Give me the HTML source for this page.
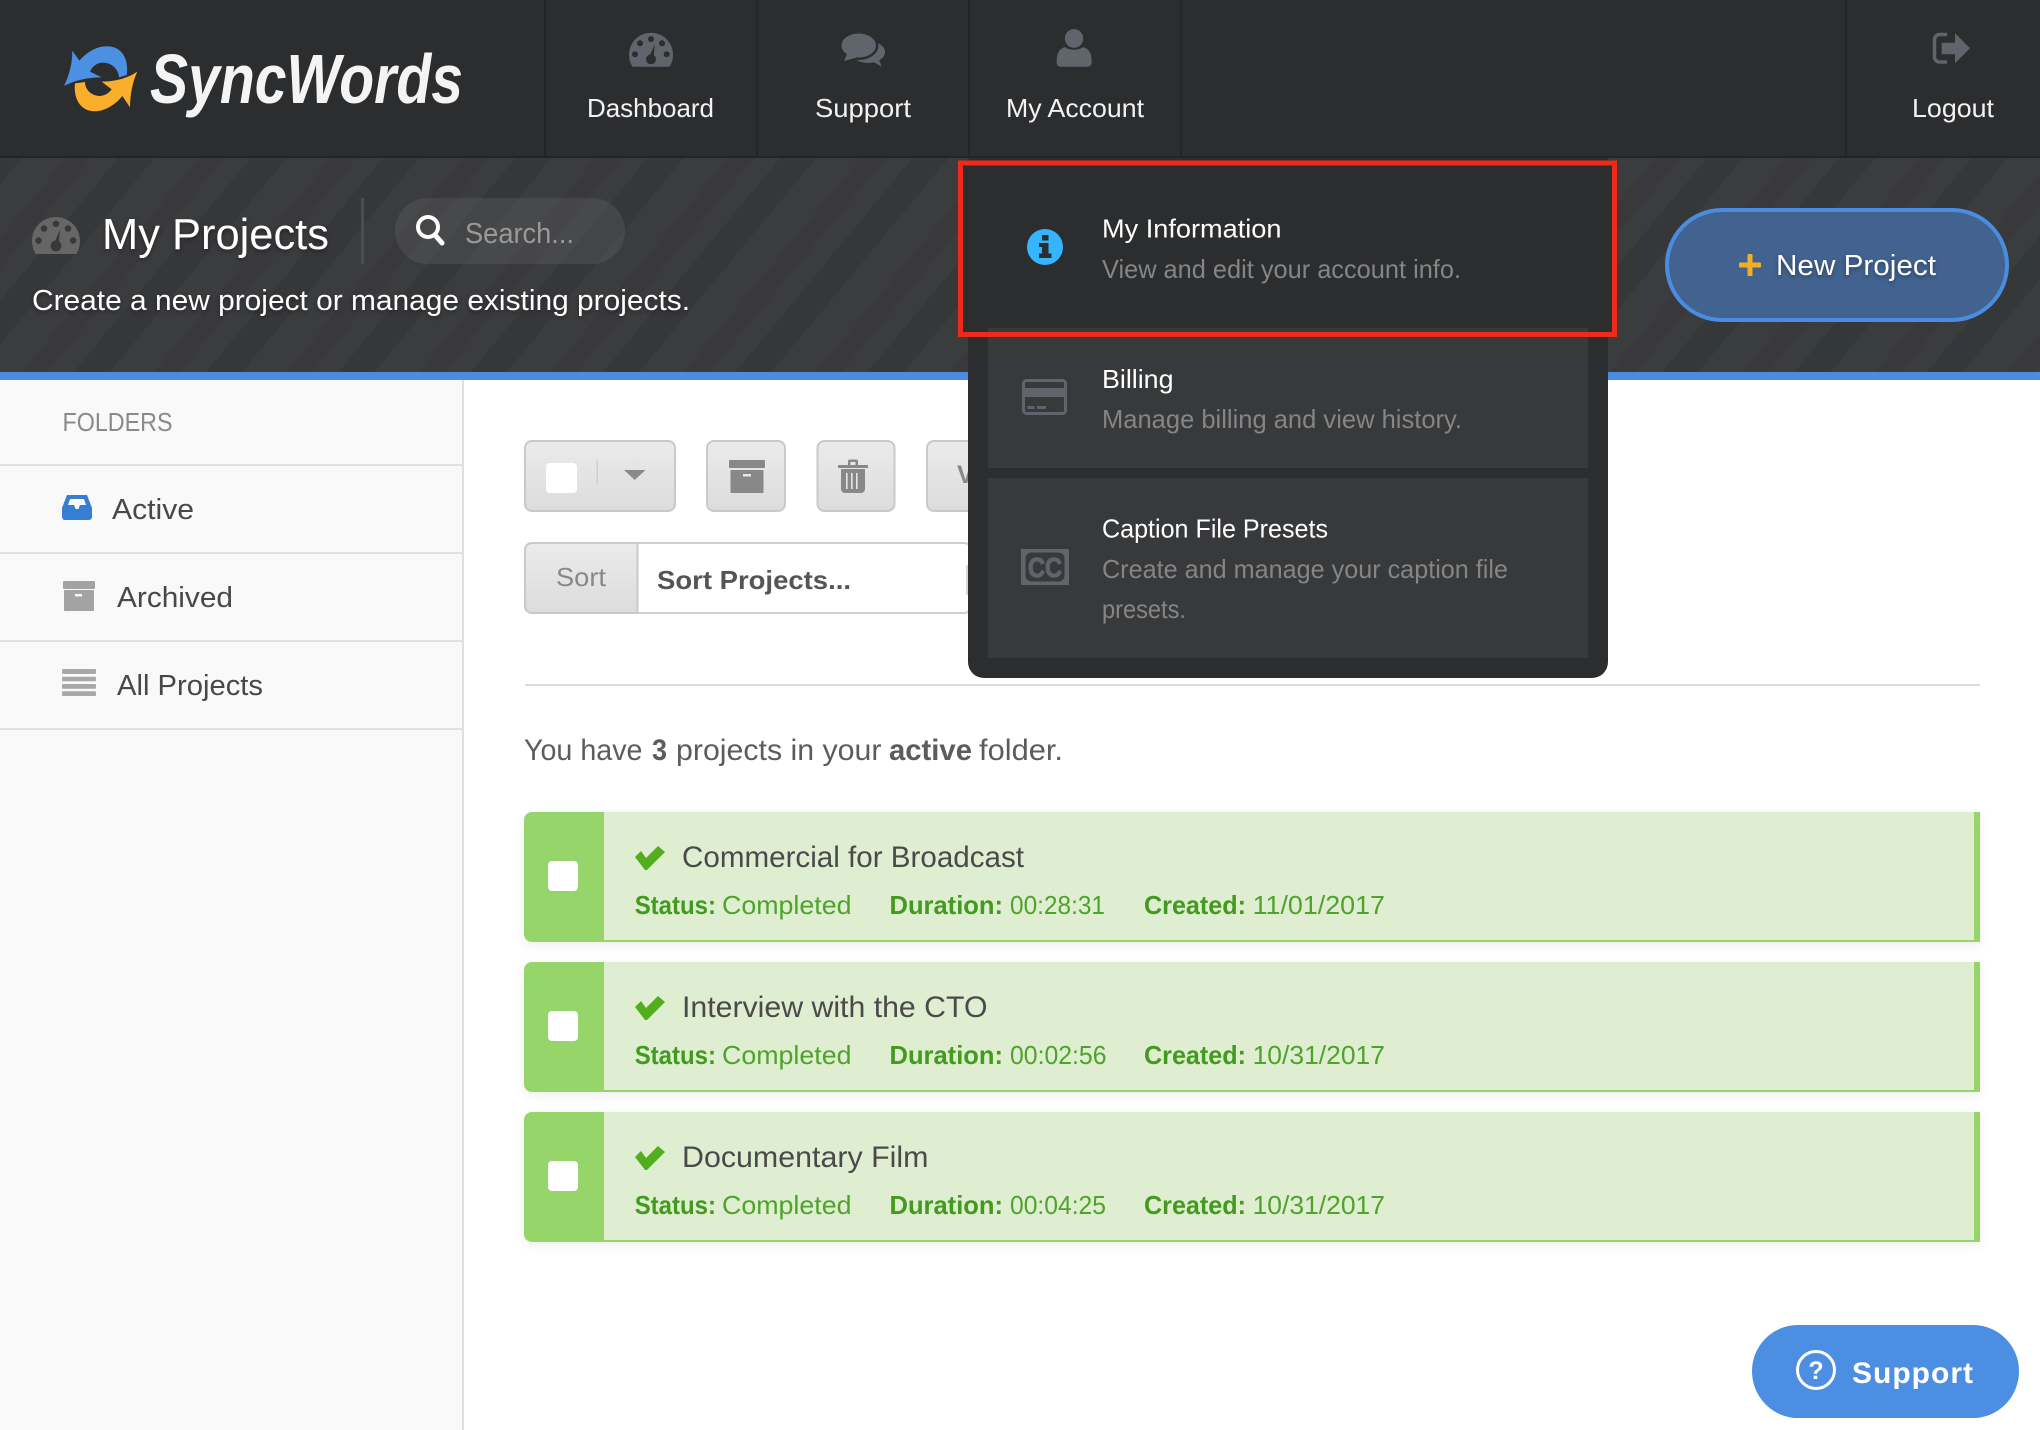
<!DOCTYPE html>
<html lang="en">
<head>
<meta charset="utf-8">
<title>SyncWords - My Projects</title>
<style>
html,body{margin:0;padding:0;background:#fff;width:2040px;height:1430px;overflow:hidden}
svg{display:block;font-family:"Liberation Sans",Arial,sans-serif}
.nav{font-size:26px;fill:#f2f2f2}
.side{font-size:29px;fill:#484848}
.t{font-size:26px;fill:#fff}
.d{font-size:26px;fill:#858585}
.ct{font-size:30px;fill:#4a4a4a}
.mb{font-size:26px;font-weight:bold;fill:#429a1e}
.mr{font-size:26px;fill:#4ea32a}
.y{font-size:30px;fill:#5c5c5c}
.yb{font-size:30px;fill:#5c5c5c;font-weight:bold}
.sh{filter:drop-shadow(0 2px 2px rgba(0,0,0,.35))}
</style>
</head>
<body>
<svg width="2040" height="1430" viewBox="0 0 2040 1430" xmlns="http://www.w3.org/2000/svg">
<defs>
<pattern id="st" patternUnits="userSpaceOnUse" width="102" height="20" patternTransform="translate(780 158) rotate(39.6)">
<rect width="102" height="20" fill="#3b3c3e"/>
<rect x="0" width="28" height="20" fill="#363739"/>
<rect x="62" width="20" height="20" fill="#39393c"/>
</pattern>
<linearGradient id="bt" x1="0" y1="0" x2="0" y2="1"><stop offset="0" stop-color="#ebebeb"/><stop offset="1" stop-color="#dcdcdc"/></linearGradient>
</defs>

<rect width="2040" height="1430" fill="#fff"/>

<!-- header -->
<rect width="2040" height="158" fill="#2c2d2f"/>
<rect y="156" width="2040" height="2" fill="#232426"/>
<rect x="544" width="2" height="156" fill="#242527"/>
<rect x="756" width="2" height="156" fill="#242527"/>
<rect x="968" width="2" height="156" fill="#242527"/>
<rect x="1180" width="2" height="156" fill="#242527"/>
<rect x="1845" width="2" height="156" fill="#242527"/>

<!-- logo -->
<g transform="translate(40 20) scale(.33333)">
<path d="M97 92 L118 122 C150 85 190 72 222 82 C252 92 266 125 260 165 L237 172 C236 150 218 130 192 128 C172 127 158 138 150 155 L185 172 C145 172 105 180 72 198 C88 165 97 130 97 92Z" fill="#4b90e2"/>
<path d="M292 155 C278 185 270 225 270 262 L247 228 C220 262 180 280 148 272 C118 264 100 232 105 190 L135 186 C135 208 152 226 178 228 C192 228 206 220 215 208 L185 185 C225 185 262 175 292 155Z" fill="#f9ae2c"/>
</g>
<text x="150" y="103" font-size="70" font-weight="bold" font-style="italic" fill="#f4f4f4" textLength="313" lengthAdjust="spacingAndGlyphs">SyncWords</text>

<!-- nav icons -->
<g transform="translate(629 32.7)">
<path d="M3.5 34 C1 30 0 26 0 22 A22 22 0 0 1 44 22 C44 26 43 30 40.5 34 Z" fill="#5f656b"/>
<g fill="#2c2d2f"><circle cx="22" cy="6.3" r="3"/><circle cx="11" cy="10.6" r="3"/><circle cx="33" cy="10.6" r="3"/><circle cx="6" cy="21.6" r="3"/><circle cx="37.7" cy="21.6" r="3"/><circle cx="22" cy="26.6" r="5"/><path d="M19.5 26 L24.5 26 L25.7 11.6Z"/></g>
</g>
<g>
<ellipse cx="868" cy="52" rx="17" ry="11" fill="#5f656b"/>
<path d="M870 60 L881.7 66.7 L878 57Z" fill="#5f656b"/>
<ellipse cx="858.7" cy="45.5" rx="18.5" ry="13.3" fill="#5f656b" stroke="#2c2d2f" stroke-width="2.5"/>
<path d="M847 54 L844 61 L857 57.5Z" fill="#5f656b"/>
</g>
<ellipse cx="1074" cy="38.5" rx="9.2" ry="9.4" fill="#5f656b"/>
<path d="M1056.7 62 C1056.7 53 1059 49 1065 47 C1068 50.5 1080 50.5 1083 47 C1089 49 1091.7 53 1091.7 62 C1091.7 65 1090 66.7 1087 66.7 H1061 C1058 66.7 1056.7 65 1056.7 62Z" fill="#5f656b"/>
<path d="M1947 34.5 H1939.5 a5 5 0 0 0 -5 5 V57 a5 5 0 0 0 5 5 H1947" fill="none" stroke="#5f656b" stroke-width="3.5"/>
<path d="M1941.7 42.7 H1955 V33.3 L1970 48.3 L1955 63.3 V54.3 H1941.7Z" fill="#5f656b"/>

<text class="nav" x="587" y="117" textLength="127" lengthAdjust="spacingAndGlyphs">Dashboard</text>
<text class="nav" x="815" y="117" textLength="96" lengthAdjust="spacingAndGlyphs">Support</text>
<text class="nav" x="1006" y="117" textLength="138" lengthAdjust="spacingAndGlyphs">My Account</text>
<text class="nav" x="1912" y="117" textLength="82" lengthAdjust="spacingAndGlyphs">Logout</text>

<!-- hero -->
<rect y="158" width="2040" height="214" fill="url(#st)"/>
<rect y="372" width="2040" height="8" fill="#4a8ce0"/>

<g transform="translate(32 217) scale(1.09)">
<path d="M3.5 34 C1 30 0 26 0 22 A22 22 0 0 1 44 22 C44 26 43 30 40.5 34 Z" fill="#666"/>
<g fill="#38393b"><circle cx="22" cy="6.3" r="3"/><circle cx="11" cy="10.6" r="3"/><circle cx="33" cy="10.6" r="3"/><circle cx="6" cy="21.6" r="3"/><circle cx="37.7" cy="21.6" r="3"/><circle cx="22" cy="26.6" r="5"/><path d="M19.5 26 L24.5 26 L25.7 11.6Z"/></g>
</g>
<text class="sh" x="102" y="249" font-size="44" fill="#fff" textLength="227" lengthAdjust="spacingAndGlyphs">My Projects</text>
<rect x="361" y="198" width="3" height="66" fill="#4c4d4f"/>
<rect x="395" y="198" width="230" height="66" rx="33" fill="#fff" fill-opacity=".07"/>
<circle cx="428" cy="227" r="10" fill="none" stroke="#fff" stroke-width="4"/>
<path d="M435 235 L442 243" stroke="#fff" stroke-width="5" stroke-linecap="round"/>
<text x="465" y="243" font-size="29" fill="#999" textLength="109" lengthAdjust="spacingAndGlyphs">Search...</text>
<text class="sh" x="32" y="310" font-size="29" fill="#fff" textLength="658" lengthAdjust="spacingAndGlyphs">Create a new project or manage existing projects.</text>

<!-- new project -->
<rect x="1667" y="210" width="340" height="110" rx="55" fill="#42638f" stroke="#4a8ce0" stroke-width="4"/>
<rect x="1747.5" y="254" width="5" height="22" rx="1" fill="#f5ad27"/>
<rect x="1739" y="262.5" width="22" height="5" rx="1" fill="#f5ad27"/>
<text class="sh" x="1776" y="275" font-size="29" fill="#fff" textLength="160" lengthAdjust="spacingAndGlyphs">New Project</text>

<!-- sidebar -->
<rect y="380" width="462" height="1050" fill="#f9f9f9"/>
<rect x="462" y="380" width="2" height="1050" fill="#e0e0e0"/>
<g fill="#e0e0e0">
<rect y="464" width="462" height="2"/>
<rect y="552" width="462" height="2"/>
<rect y="640" width="462" height="2"/>
<rect y="728" width="462" height="2"/>
</g>
<text x="62.500" y="431" font-size="26" fill="#8a8a8a" textLength="110" lengthAdjust="spacingAndGlyphs">FOLDERS</text>
<path d="M67 495 H87 L92 508 V517 a3 3 0 0 1 -3 3 H65 a3 3 0 0 1 -3 -3 V508Z" fill="#347fd4"/>
<path d="M70 499 H84 L86 505 H80 L78.500 509 H75.500 L74 505 H68Z" fill="#f9f9f9"/>
<text class="side" x="112" y="519" textLength="82" lengthAdjust="spacingAndGlyphs">Active</text>
<rect x="63" y="581" width="32" height="8" rx="1" fill="#a3a3a3"/>
<rect x="64" y="590" width="30" height="21" rx="1" fill="#a3a3a3"/>
<rect x="75" y="594" width="7" height="2.5" fill="#f9f9f9"/>
<text class="side" x="117" y="607" textLength="116" lengthAdjust="spacingAndGlyphs">Archived</text>
<g fill="#a8a8a8">
<rect x="62" y="669" width="34" height="5" rx="1"/>
<rect x="62" y="676.7" width="34" height="4.6" rx="1"/>
<rect x="62" y="684" width="34" height="4.7" rx="1"/>
<rect x="62" y="691.3" width="34" height="4.7" rx="1"/>
</g>
<text class="side" x="117" y="695" textLength="146" lengthAdjust="spacingAndGlyphs">All Projects</text>

<!-- toolbar -->
<g fill="url(#bt)" stroke="#c9c9c9" stroke-width="2">
<rect x="525" y="441" width="150" height="70" rx="7"/>
<rect x="707" y="441" width="78" height="70" rx="7"/>
<rect x="817.500" y="441" width="77" height="70" rx="7"/>
<rect x="927" y="441" width="80" height="70" rx="7"/>
</g>
<rect x="546" y="463" width="31" height="30" rx="4" fill="#fff"/>
<rect x="596.5" y="460" width="1.5" height="25" fill="#cfcfcf"/>
<path d="M624 470 H645.5 L634.7 480Z" fill="#8a8a8a"/>
<rect x="729" y="460" width="36" height="8" rx="1" fill="#888"/>
<rect x="730.5" y="470" width="33" height="23" rx="1" fill="#888"/>
<rect x="743" y="474" width="8" height="2.5" fill="#e6e6e6"/>
<path d="M838 465 H868 V468 H838Z M848 465 V461.5 a2 2 0 0 1 2 -2 H856 a2 2 0 0 1 2 2 V465 H855.5 V462 H850.500 V465Z" fill="#888"/>
<path d="M841 469 H865 V489 a4 4 0 0 1 -4 4 H845 a4 4 0 0 1 -4 -4Z" fill="#888"/>
<g fill="#e6e6e6"><rect x="846" y="473" width="1.6" height="16"/><rect x="851" y="473" width="1.6" height="16"/><rect x="856" y="473" width="1.600" height="16"/></g>
<text x="957" y="483" font-size="25" font-weight="bold" fill="#888">V</text>

<rect x="525" y="543" width="446" height="70" rx="7" fill="#fff" stroke="#cfcfcf" stroke-width="2"/>
<path d="M532 543 H637.500 V613 H532 a7 7 0 0 1 -7 -7 V550 a7 7 0 0 1 7 -7Z" fill="url(#bt)" stroke="#c9c9c9" stroke-width="2"/>
<text x="556" y="586" font-size="26" fill="#888" textLength="50" lengthAdjust="spacingAndGlyphs">Sort</text>
<text x="657" y="589" font-size="26" font-weight="bold" fill="#555" textLength="194" lengthAdjust="spacingAndGlyphs">Sort Projects...</text>
<rect x="966" y="565" width="3" height="30" fill="#d8d8d8"/>

<rect x="525" y="684" width="1455" height="2" fill="#dcdcdc"/>

<text class="y" x="524" y="760" textLength="118.500" lengthAdjust="spacingAndGlyphs">You have</text>
<text class="yb" x="652" y="760" textLength="15" lengthAdjust="spacingAndGlyphs">3</text>
<text class="y" x="676" y="760" textLength="205.500" lengthAdjust="spacingAndGlyphs">projects in your</text>
<text class="yb" x="889" y="760" textLength="83" lengthAdjust="spacingAndGlyphs">active</text>
<text class="y" x="979" y="760" textLength="84" lengthAdjust="spacingAndGlyphs">folder.</text>

<!-- cards -->
<g style="filter:drop-shadow(0 3px 5px rgba(0,0,0,.07))">
<g>
<path d="M532 812 H1980 V942 H532 a8 8 0 0 1 -8 -8 V820 a8 8 0 0 1 8 -8Z" fill="#dfeed1"/>
<path d="M532 812 H604 V942 H532 a8 8 0 0 1 -8 -8 V820 a8 8 0 0 1 8 -8Z" fill="#96d56a"/>
<rect x="604" y="940" width="1376" height="2" fill="#96d56a"/><rect x="1974" y="812" width="6" height="130" fill="#96d56a"/>
</g>
<g>
<path d="M532 962 H1980 V1092 H532 a8 8 0 0 1 -8 -8 V970 a8 8 0 0 1 8 -8Z" fill="#dfeed1"/>
<path d="M532 962 H604 V1092 H532 a8 8 0 0 1 -8 -8 V970 a8 8 0 0 1 8 -8Z" fill="#96d56a"/>
<rect x="604" y="1090" width="1376" height="2" fill="#96d56a"/><rect x="1974" y="962" width="6" height="130" fill="#96d56a"/>
</g>
<g>
<path d="M532 1112 H1980 V1242 H532 a8 8 0 0 1 -8 -8 V1120 a8 8 0 0 1 8 -8Z" fill="#dfeed1"/>
<path d="M532 1112 H604 V1242 H532 a8 8 0 0 1 -8 -8 V1120 a8 8 0 0 1 8 -8Z" fill="#96d56a"/>
<rect x="604" y="1240" width="1376" height="2" fill="#96d56a"/><rect x="1974" y="1112" width="6" height="130" fill="#96d56a"/>
</g>
</g>

<g>
<rect x="548" y="861" width="30" height="30" rx="4" fill="#fff"/>
<path d="M635 857 L641 851 L646 858 L658 846 L665 852 L647 870 H645Z" fill="#52ad1f"/>
<text class="ct" x="682" y="867" textLength="342" lengthAdjust="spacingAndGlyphs">Commercial for Broadcast</text>
<text class="mb" x="634.700" y="914" textLength="81.300" lengthAdjust="spacingAndGlyphs">Status:</text>
<text class="mr" x="722" y="914" textLength="129.500" lengthAdjust="spacingAndGlyphs">Completed</text>
<text class="mb" x="889.500" y="914" textLength="113.500" lengthAdjust="spacingAndGlyphs">Duration:</text>
<text class="mr" x="1010" y="914" textLength="95" lengthAdjust="spacingAndGlyphs">00:28:31</text>
<text class="mb" x="1144" y="914" textLength="102" lengthAdjust="spacingAndGlyphs">Created:</text>
<text class="mr" x="1252.600" y="914" textLength="132.400" lengthAdjust="spacingAndGlyphs">11/01/2017</text>
</g>
<g>
<rect x="548" y="1011" width="30" height="30" rx="4" fill="#fff"/>
<path d="M635 1007 L641 1001 L646 1008 L658 996 L665 1002 L647 1020 H645Z" fill="#52ad1f"/>
<text class="ct" x="682" y="1017" textLength="305.500" lengthAdjust="spacingAndGlyphs">Interview with the CTO</text>
<text class="mb" x="634.700" y="1064" textLength="81.300" lengthAdjust="spacingAndGlyphs">Status:</text>
<text class="mr" x="722" y="1064" textLength="129.500" lengthAdjust="spacingAndGlyphs">Completed</text>
<text class="mb" x="889.500" y="1064" textLength="113.500" lengthAdjust="spacingAndGlyphs">Duration:</text>
<text class="mr" x="1010" y="1064" textLength="96.500" lengthAdjust="spacingAndGlyphs">00:02:56</text>
<text class="mb" x="1144" y="1064" textLength="102" lengthAdjust="spacingAndGlyphs">Created:</text>
<text class="mr" x="1252.600" y="1064" textLength="132.400" lengthAdjust="spacingAndGlyphs">10/31/2017</text>
</g>
<g>
<rect x="548" y="1161" width="30" height="30" rx="4" fill="#fff"/>
<path d="M635 1157 L641 1151 L646 1158 L658 1146 L665 1152 L647 1170 H645Z" fill="#52ad1f"/>
<text class="ct" x="682" y="1167" textLength="246.500" lengthAdjust="spacingAndGlyphs">Documentary Film</text>
<text class="mb" x="634.700" y="1214" textLength="81.300" lengthAdjust="spacingAndGlyphs">Status:</text>
<text class="mr" x="722" y="1214" textLength="129.500" lengthAdjust="spacingAndGlyphs">Completed</text>
<text class="mb" x="889.500" y="1214" textLength="113.500" lengthAdjust="spacingAndGlyphs">Duration:</text>
<text class="mr" x="1010" y="1214" textLength="96" lengthAdjust="spacingAndGlyphs">00:04:25</text>
<text class="mb" x="1144" y="1214" textLength="102" lengthAdjust="spacingAndGlyphs">Created:</text>
<text class="mr" x="1252.600" y="1214" textLength="132.400" lengthAdjust="spacingAndGlyphs">10/31/2017</text>
</g>

<!-- dropdown -->
<path d="M968 158 H1608 V662 a16 16 0 0 1 -16 16 H984 a16 16 0 0 1 -16 -16Z" fill="#2c2d2f"/>
<rect x="962" y="164" width="651" height="170" fill="#2c2d2f"/>
<rect x="988" y="328" width="600" height="140" fill="#38393b"/>
<rect x="988" y="478" width="600" height="180" fill="#38393b"/>

<circle cx="1045" cy="247" r="18" fill="#35b5ff"/>
<g fill="#2c2d2f">
<rect x="1042" y="235" width="6.500" height="5.500"/>
<path d="M1039 243 H1048.500 V253.500 H1051.500 V258 H1039 V253.500 H1042 V247 H1039Z"/>
</g>
<text class="t" x="1102" y="237.500" textLength="179.500" lengthAdjust="spacingAndGlyphs">My Information</text>
<text class="d" x="1102" y="278" textLength="359" lengthAdjust="spacingAndGlyphs">View and edit your account info.</text>

<rect x="1023.500" y="380.500" width="42" height="33" rx="3" fill="none" stroke="#5f656b" stroke-width="3"/>
<rect x="1023.500" y="388" width="42" height="9" fill="#5f656b"/>
<rect x="1027.500" y="406" width="7" height="3" fill="#5f656b"/>
<rect x="1037" y="406" width="9" height="3" fill="#5f656b"/>
<text class="t" x="1102" y="388" textLength="71.500" lengthAdjust="spacingAndGlyphs">Billing</text>
<text class="d" x="1102" y="428" textLength="360" lengthAdjust="spacingAndGlyphs">Manage billing and view history.</text>

<rect x="1021" y="549" width="48" height="36" fill="#5f656b"/>
<rect x="1025.500" y="552.500" width="39" height="29" rx="6" fill="#38393b"/>
<text x="1028" y="577" font-size="28" font-weight="bold" fill="#5f656b" stroke="#5f656b" stroke-width="1" textLength="34" lengthAdjust="spacingAndGlyphs">CC</text>
<text class="t" x="1102" y="537.500" textLength="226" lengthAdjust="spacingAndGlyphs">Caption File Presets</text>
<text class="d" x="1102" y="578" textLength="406" lengthAdjust="spacingAndGlyphs">Create and manage your caption file</text>
<text class="d" x="1102" y="618" textLength="84" lengthAdjust="spacingAndGlyphs">presets.</text>

<!-- highlight -->
<rect x="960.500" y="163" width="654" height="171.500" fill="none" stroke="#f0291a" stroke-width="5"/>

<!-- support -->
<path d="M1798 1325 H1973 a46 46 0 0 1 46 46 a47 47 0 0 1 -42 47 H1794 a47 47 0 0 1 -42 -47 a46 46 0 0 1 46 -46Z" fill="#4c8ee2"/>
<circle cx="1816" cy="1370" r="18.500" fill="none" stroke="#fff" stroke-width="3"/>
<text x="1816" y="1379" font-size="25" font-weight="bold" fill="#fff" text-anchor="middle">?</text>
<text x="1852" y="1383" font-size="30" font-weight="bold" fill="#fff" textLength="121" lengthAdjust="spacing">Support</text>
</svg>
</body>
</html>
